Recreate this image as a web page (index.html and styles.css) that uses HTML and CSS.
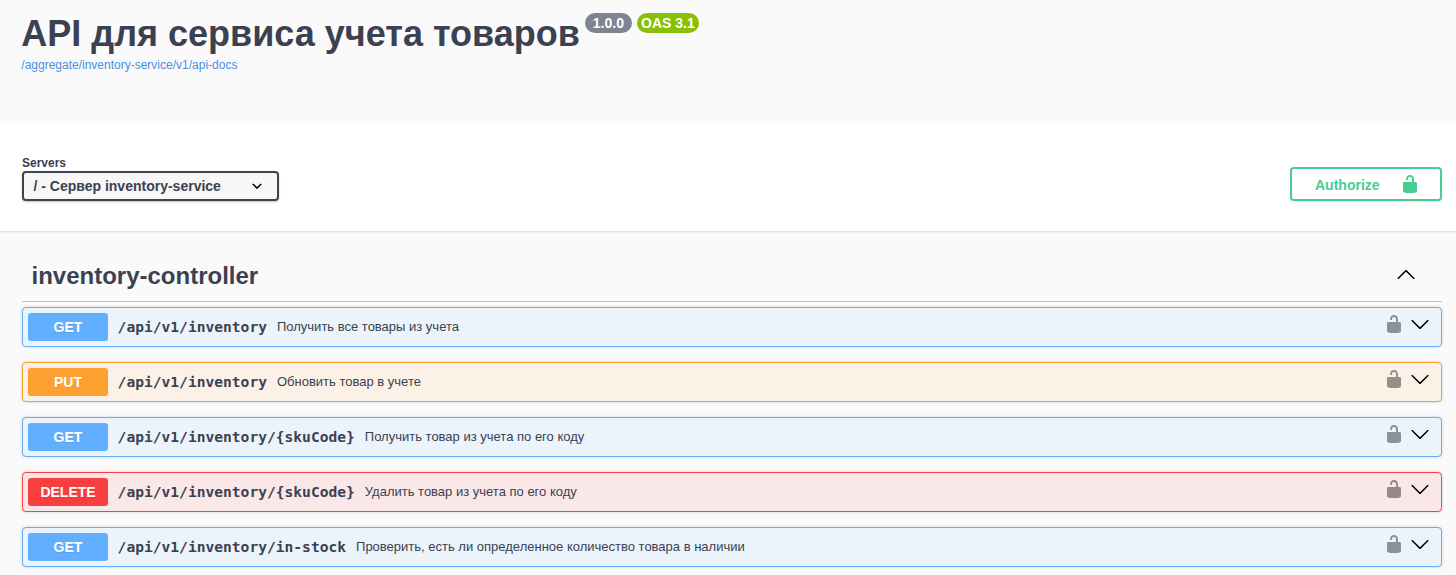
FILE: index.html
```html
<!DOCTYPE html>
<html lang="ru">
<head>
<meta charset="utf-8">
<title>API для сервиса учета товаров</title>
<link rel="stylesheet" href="styles.css">
</head>
<body>
<svg class="defs" aria-hidden="true">
  <symbol id="unlocked" viewBox="0 0 20 20"><path d="M15.8 8H14V5.6C14 2.703 12.665 1 10 1 7.334 1 6 2.703 6 5.6V6h2v-.801C8 3.754 8.797 3 10 3c1.203 0 2 .754 2 2.199V8H4c-.553 0-1 .646-1 1.199V17c0 .549.428 1.139.951 1.307l1.197.387C5.672 18.861 6.55 19 7.1 19h5.8c.549 0 1.428-.139 1.951-.307l1.196-.387c.524-.167.953-.757.953-1.306V9.199C17 8.646 16.352 8 15.8 8z"/></symbol>
  <symbol id="arrow-down" viewBox="0 0 20 20"><path d="M17.418 6.109c.272-.268.709-.268.979 0s.271.701 0 .969l-7.908 7.83c-.27.268-.707.268-.979 0l-7.908-7.83c-.27-.268-.271-.701 0-.969s.709-.268.979 0L10 13.25l7.418-7.141z"/></symbol>
  <symbol id="arrow-up" viewBox="0 0 20 20"><path d="M17.418 14.908c.272.268.709.268.979 0s.271-.701 0-.969l-7.908-7.83c-.27-.268-.707-.268-.979 0l-7.908 7.83c-.27.268-.271.701 0 .969s.709.268.979 0L10 7.767l7.418 7.141z"/></symbol>
  <symbol id="select-arrow" viewBox="0 0 20 20"><path d="M13.418 7.859c.271-.268.709-.268.978 0 .27.268.272.701 0 .969l-3.908 3.83c-.27.268-.707.268-.979 0l-3.908-3.83c-.27-.267-.27-.701 0-.969.271-.268.709-.268.978 0L10 11l3.418-3.141z"/></symbol>
</svg>

<header class="info">
  <div class="title-row">
    <h1 class="title">API для сервиса учета товаров</h1>
    <span class="badge version">1.0.0</span>
    <span class="badge oas">OAS 3.1</span>
  </div>
  <a class="link">/aggregate/inventory-service/v1/api-docs</a>
</header>

<section class="schemes">
  <div class="servers">
    <span class="servers-label">Servers</span>
    <div class="select"><span>/ - Сервер inventory-service</span><svg class="icon"><use href="#select-arrow"/></svg></div>
  </div>
  <button class="authorize"><span class="authorize-text">Authorize</span><svg class="icon"><use href="#unlocked"/></svg></button>
</section>

<main class="operations">
  <div class="tag"><h2 class="tag-name">inventory-controller</h2><svg class="icon tag-arrow"><use href="#arrow-up"/></svg></div>
  <div class="list">
    <div class="op get"><span class="method">GET</span><span class="path">/api/v1/inventory</span><span class="desc">Получить все товары из учета</span><svg class="icon lock"><use href="#unlocked"/></svg><svg class="icon arrow"><use href="#arrow-down"/></svg></div>
    <div class="op put"><span class="method">PUT</span><span class="path">/api/v1/inventory</span><span class="desc">Обновить товар в учете</span><svg class="icon lock"><use href="#unlocked"/></svg><svg class="icon arrow"><use href="#arrow-down"/></svg></div>
    <div class="op get"><span class="method">GET</span><span class="path">/api/v1/inventory/{skuCode}</span><span class="desc">Получить товар из учета по его коду</span><svg class="icon lock"><use href="#unlocked"/></svg><svg class="icon arrow"><use href="#arrow-down"/></svg></div>
    <div class="op delete"><span class="method">DELETE</span><span class="path">/api/v1/inventory/{skuCode}</span><span class="desc">Удалить товар из учета по его коду</span><svg class="icon lock"><use href="#unlocked"/></svg><svg class="icon arrow"><use href="#arrow-down"/></svg></div>
    <div class="op get"><span class="method">GET</span><span class="path">/api/v1/inventory/in-stock</span><span class="desc">Проверить, есть ли определенное количество товара в наличии</span><svg class="icon lock"><use href="#unlocked"/></svg><svg class="icon arrow"><use href="#arrow-down"/></svg></div>
  </div>
</main>
</body>
</html>
```
FILE: styles.css
```css
* { box-sizing: border-box; }
body {
  margin: 0;
  height: 575px;
  overflow: hidden;
  background: #fafafa;
  color: #3b4151;
  font-family: "Liberation Sans", Arial, sans-serif;
}
.defs { display: none; }
.icon { display: block; width: 20px; height: 20px; flex: none; }

.info { height: 123px; padding: 13px 21.3px 0; }
.title-row { display: flex; align-items: flex-start; }
.title { margin: 0; font-size: 36px; line-height: 42px; white-space: nowrap; }
.badge {
  height: 20px;
  margin-left: 5px;
  border-radius: 10px;
  color: #fff;
  font-size: 14px;
  font-weight: 700;
  line-height: 21px;
  text-align: center;
}
.version { width: 47px; background: #7d8492; }
.oas { width: 62px; background: #89bf04; }
.link { display: block; margin-top: 3px; font-size: 12px; line-height: 14px; color: #4990e2; }

.schemes {
  display: flex;
  justify-content: space-between;
  height: 108px;
  padding: 32px 14px 0 22px;
  background: #fff;
  box-shadow: 0 1px 2px rgba(0, 0, 0, .15);
}
.servers-label { display: block; height: 16px; font-size: 12px; font-weight: 700; line-height: 16px; }
.select {
  display: flex;
  align-items: center;
  justify-content: space-between;
  width: 257px;
  height: 30px;
  padding: 0 10px 0 9.5px;
  border: 2px solid #41444e;
  border-radius: 4px;
  background: #f7f7f7;
  box-shadow: 0 1px 2px rgba(0, 0, 0, .25);
  font-size: 14px;
  font-weight: 700;
}
.authorize {
  display: flex;
  align-items: center;
  justify-content: space-between;
  width: 152px;
  height: 34px;
  margin-top: 12px;
  padding: 0 20px 0 23px;
  border: 2px solid #49cc90;
  border-radius: 4px;
  background: transparent;
  box-shadow: 0 1px 2px rgba(0, 0, 0, .1);
  color: #49cc90;
  fill: #49cc90;
  font: 700 14px "Liberation Sans", Arial, sans-serif;
}
.authorize-text { padding-top: 2px; }

.operations { padding: 20px 14px 0 22px; }
.tag {
  display: flex;
  align-items: center;
  justify-content: space-between;
  height: 51px;
  padding: 0 26px 2px 9.5px;
  border-bottom: 1px solid rgba(59, 65, 81, .3);
}
.tag-name { margin: 2px 0 0; font-size: 24px; line-height: 28px; }
.tag-arrow { margin-bottom: 2px; }
.list { display: grid; gap: 15px; padding-top: 5px; }
.op {
  display: flex;
  align-items: center;
  height: 40px;
  padding: 0 11px 0 5px;
  border: 1px solid var(--color);
  border-radius: 4px;
  background: var(--tint);
  box-shadow: 0 0 3px rgba(0, 0, 0, .19);
}
.get { --color: #61affe; --tint: #ebf3fb; }
.put { --color: #fca130; --tint: #fbf1e6; }
.delete { --color: #f93e3e; --tint: #fae7e7; }
.method {
  width: 80px;
  height: 28px;
  border-radius: 3px;
  background: var(--color);
  color: #fff;
  font-size: 14px;
  font-weight: 700;
  line-height: 29px;
  text-align: center;
  text-shadow: 0 1px 0 rgba(0, 0, 0, .1);
}
.path {
  margin: 0 10px 1px 9.6px;
  font: 700 14.6px "DejaVu Sans Mono", monospace;
  white-space: nowrap;
}
.desc { flex: 1; margin-bottom: 2px; font-size: 13px; white-space: nowrap; }
.lock { margin: 0 6px 6px 0; opacity: .4; }
.arrow { margin-bottom: 7px; }
```
